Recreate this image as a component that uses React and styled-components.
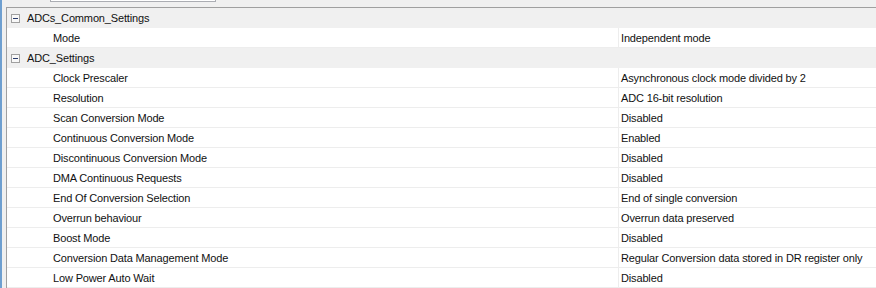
import styled, { createGlobalStyle } from 'styled-components'

const GlobalStyle = createGlobalStyle`
  html, body {
    margin: 0;
    padding: 0;
    background: #f0f0f0;
  }
`

const Window = styled.div`
  width: 876px;
  height: 288px;
  overflow: hidden;
  display: flex;
  background: #f0f0f0;
  font-family: 'Liberation Sans', Arial, sans-serif;
  font-size: 11px;
  letter-spacing: -0.15px;
  color: #111111;
`

const BlueEdge = styled.div`
  width: 2px;
  background: #6e9fd0;
`

const Body = styled.div`
  flex: 1;
  display: flex;
  flex-direction: column;
`

const SearchStrip = styled.div`
  height: 8px;
  padding-left: 48px;
  display: flex;
  align-items: flex-start;
`

const SearchBox = styled.div`
  width: 164px;
  height: 1px;
  background: #ffffff;
  border: 1px solid #abadb3;
  border-top: none;
`

const Panel = styled.div`
  flex: 1;
  margin-left: 4px;
  border-top: 1px solid #a0a0a0;
  border-left: 1px solid #a0a0a0;
  display: flex;
  flex-direction: column;
`

const GroupRow = styled.div`
  height: 20px;
  display: flex;
  align-items: center;
  background: #f0f0f0;
  padding-left: 4px;
`

const Toggle = styled.div`
  width: 9px;
  height: 9px;
  box-sizing: border-box;
  border: 1px solid #a0a0a0;
  background: #f8f8f8;
  display: flex;
  align-items: center;
  justify-content: center;
  margin-right: 7px;

  &::after {
    content: '';
    width: 5px;
    height: 1px;
    background: #2a3a6a;
  }
`

const Row = styled.div`
  height: 20px;
  box-sizing: border-box;
  display: grid;
  grid-template-columns: 611px 1fr;
  background: #ffffff;
  border-bottom: 1px solid #ededed;
`

const NameCell = styled.div`
  display: flex;
  align-items: center;
  padding-left: 46px;
  white-space: nowrap;
`

const ValueCell = styled.div`
  display: flex;
  align-items: center;
  padding-left: 2px;
  border-left: 1px solid #ededed;
  white-space: nowrap;
`

const groups = [
  {
    title: 'ADCs_Common_Settings',
    rows: [['Mode', 'Independent mode']],
  },
  {
    title: 'ADC_Settings',
    rows: [
      ['Clock Prescaler', 'Asynchronous clock mode divided by 2'],
      ['Resolution', 'ADC 16-bit resolution'],
      ['Scan Conversion Mode', 'Disabled'],
      ['Continuous Conversion Mode', 'Enabled'],
      ['Discontinuous Conversion Mode', 'Disabled'],
      ['DMA Continuous Requests', 'Disabled'],
      ['End Of Conversion Selection', 'End of single conversion'],
      ['Overrun behaviour', 'Overrun data preserved'],
      ['Boost Mode', 'Disabled'],
      ['Conversion Data Management Mode', 'Regular Conversion data stored in DR register only'],
      ['Low Power Auto Wait', 'Disabled'],
    ],
  },
]

const App = () => (
  <>
    <GlobalStyle />
    <Window>
      <BlueEdge />
      <Body>
        <SearchStrip>
          <SearchBox />
        </SearchStrip>
        <Panel>
          {groups.map((group) => (
            <div key={group.title}>
              <GroupRow>
                <Toggle />
                {group.title}
              </GroupRow>
              {group.rows.map(([name, value]) => (
                <Row key={name}>
                  <NameCell>{name}</NameCell>
                  <ValueCell>{value}</ValueCell>
                </Row>
              ))}
            </div>
          ))}
        </Panel>
      </Body>
    </Window>
  </>
)

export default App
